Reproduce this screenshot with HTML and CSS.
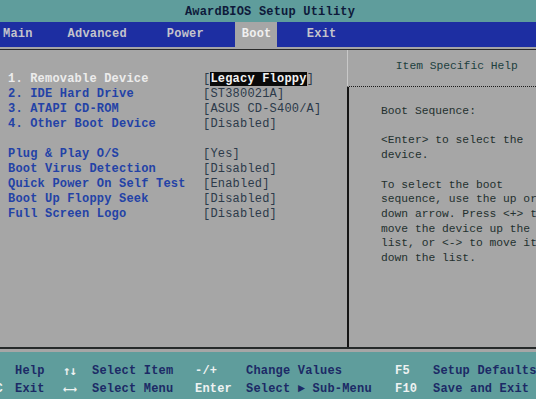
FILE: index.html
```html
<!DOCTYPE html>
<html lang="en">
<head>
    <meta charset="UTF-8">
    <title>AwardBIOS Setup Utility</title>
    <link rel="stylesheet" href="styles.css">
</head>
<body>
    <div class="screen">
        <div class="title">AwardBIOS Setup Utility</div>

        <div class="menubar">
            <span class="menu-item m-main">Main</span>
            <span class="menu-item m-adv">Advanced</span>
            <span class="menu-item m-power">Power</span>
            <span class="menu-item m-boot active">Boot</span>
            <span class="menu-item m-exit">Exit</span>
        </div>

        <div class="body">
            <div class="frame">
                <div class="items">
                    <span class="label selected">1. Removable Device</span>
                    <span class="value">[<span class="hl">Legacy Floppy</span>]</span>
                    <span class="label">2. IDE Hard Drive</span>
                    <span class="value">[ST380021A]</span>
                    <span class="label">3. ATAPI CD-ROM</span>
                    <span class="value">[ASUS CD-S400/A]</span>
                    <span class="label">4. Other Boot Device</span>
                    <span class="value">[Disabled]</span>

                    <span class="spacer"></span>

                    <span class="label">Plug &amp; Play O/S</span>
                    <span class="value">[Yes]</span>
                    <span class="label">Boot Virus Detection</span>
                    <span class="value">[Disabled]</span>
                    <span class="label">Quick Power On Self Test</span>
                    <span class="value">[Enabled]</span>
                    <span class="label">Boot Up Floppy Seek</span>
                    <span class="value">[Disabled]</span>
                    <span class="label">Full Screen Logo</span>
                    <span class="value">[Disabled]</span>
                </div>

                <div class="help">
                    <div class="help-head">Item Specific Help</div>
                    <div class="help-text">Boot Sequence:

&lt;Enter&gt; to select the
device.

To select the boot
sequence, use the up or
down arrow. Press &lt;+&gt; to
move the device up the
list, or &lt;-&gt; to move it
down the list.</div>
                </div>
            </div>
        </div>

        <div class="footer">
            <span class="key"></span>
            <span class="desc">Help</span>
            <span class="key arrows">↑↓</span>
            <span class="desc">Select Item</span>
            <span class="key">-/+</span>
            <span class="desc">Change Values</span>
            <span class="key">F5</span>
            <span class="desc">Setup Defaults</span>

            <span class="key">ESC</span>
            <span class="desc">Exit</span>
            <span class="key arrows">←→</span>
            <span class="desc">Select Menu</span>
            <span class="key">Enter</span>
            <span class="desc">Select ► Sub-Menu</span>
            <span class="key">F10</span>
            <span class="desc">Save and Exit</span>
        </div>
    </div>
</body>
</html>
```

FILE: styles.css
```css
body {
    margin: 0;
    padding: 0;
    background-color: #a6a6a6;
    font-family: "Liberation Mono", "DejaVu Sans Mono", monospace;
    font-size: 12px;
    letter-spacing: 0.2px;
}

.screen {
    width: 536px;
    height: 399px;
    display: flex;
    flex-direction: column;
    overflow: hidden;
}

.title {
    height: 22px;
    line-height: 24px;
    background-color: #5f9d9c;
    color: #0e1a3a;
    font-weight: bold;
    text-align: center;
    padding-left: 4px;
}

.menubar {
    height: 25px;
    background-color: #1d2ea2;
    display: flex;
    align-items: stretch;
    font-weight: bold;
}

.menu-item {
    color: #c4c4cc;
    line-height: 24px;
}

.m-main {
    margin-left: 3px;
}

.m-adv {
    margin-left: 35px;
}

.m-power {
    margin-left: 40px;
}

.m-boot {
    margin-left: 31px;
    padding: 0 7px;
    width: 28px;
}

.menu-item.active {
    background-color: #a6a6a6;
    color: #f0f0f0;
}

.m-exit {
    margin-left: 30px;
}

.body {
    flex: 1;
    padding-top: 2px;
    padding-bottom: 3px;
    display: flex;
}

.frame {
    flex: 1;
    display: flex;
    border-top: 1px solid #2a2a2a;
    border-bottom: 2px solid #262a2a;
}

.items {
    width: 347px;
    padding: 22px 0 0 8px;
    box-sizing: border-box;
    display: grid;
    grid-template-columns: 195px auto;
    grid-auto-rows: 15px;
    align-content: start;
    font-weight: bold;
}

.label {
    color: #2342a6;
    line-height: 15px;
}

.label.selected {
    color: #ececec;
}

.value {
    color: #2c3a4a;
    line-height: 15px;
    font-weight: normal;
}

.hl {
    background-color: #0a0a0a;
    color: #f2f2f2;
    font-weight: bold;
}

.spacer {
    grid-column: 1 / 3;
}

.help {
    flex: 1;
    display: flex;
    flex-direction: column;
    overflow: hidden;
    font-size: 11.3px;
    letter-spacing: 0;
}

.help-head {
    height: 36px;
    line-height: 32px;
    text-align: center;
    color: #20403e;
    border-left: 1px solid #c8c8c8;
    border-bottom: 1px dotted #1a1a1a;
    padding-left: 22px;
}

.help-text {
    flex: 1;
    border-left: 2px solid #151515;
    padding: 17px 0 0 32px;
    white-space: pre;
    line-height: 14.7px;
    color: #23302e;
}

.footer {
    height: 47px;
    box-sizing: border-box;
    background-color: #5f9d9c;
    padding-top: 10px;
    display: grid;
    grid-template-columns: 15px 48px 29px 103px 51px 149px 38px auto;
    grid-auto-rows: 18px;
    font-weight: bold;
    white-space: nowrap;
}

.footer .key {
    color: #eef2f2;
    line-height: 18px;
}

.footer .arrows {
    font-family: "DejaVu Sans Mono", monospace;
    font-size: 12.5px;
    letter-spacing: -1px;
}

.footer .key:nth-child(8n+1) {
    justify-self: end;
    margin-right: 12px;
}

.footer .desc {
    color: #1c2a66;
    line-height: 18px;
}
```
